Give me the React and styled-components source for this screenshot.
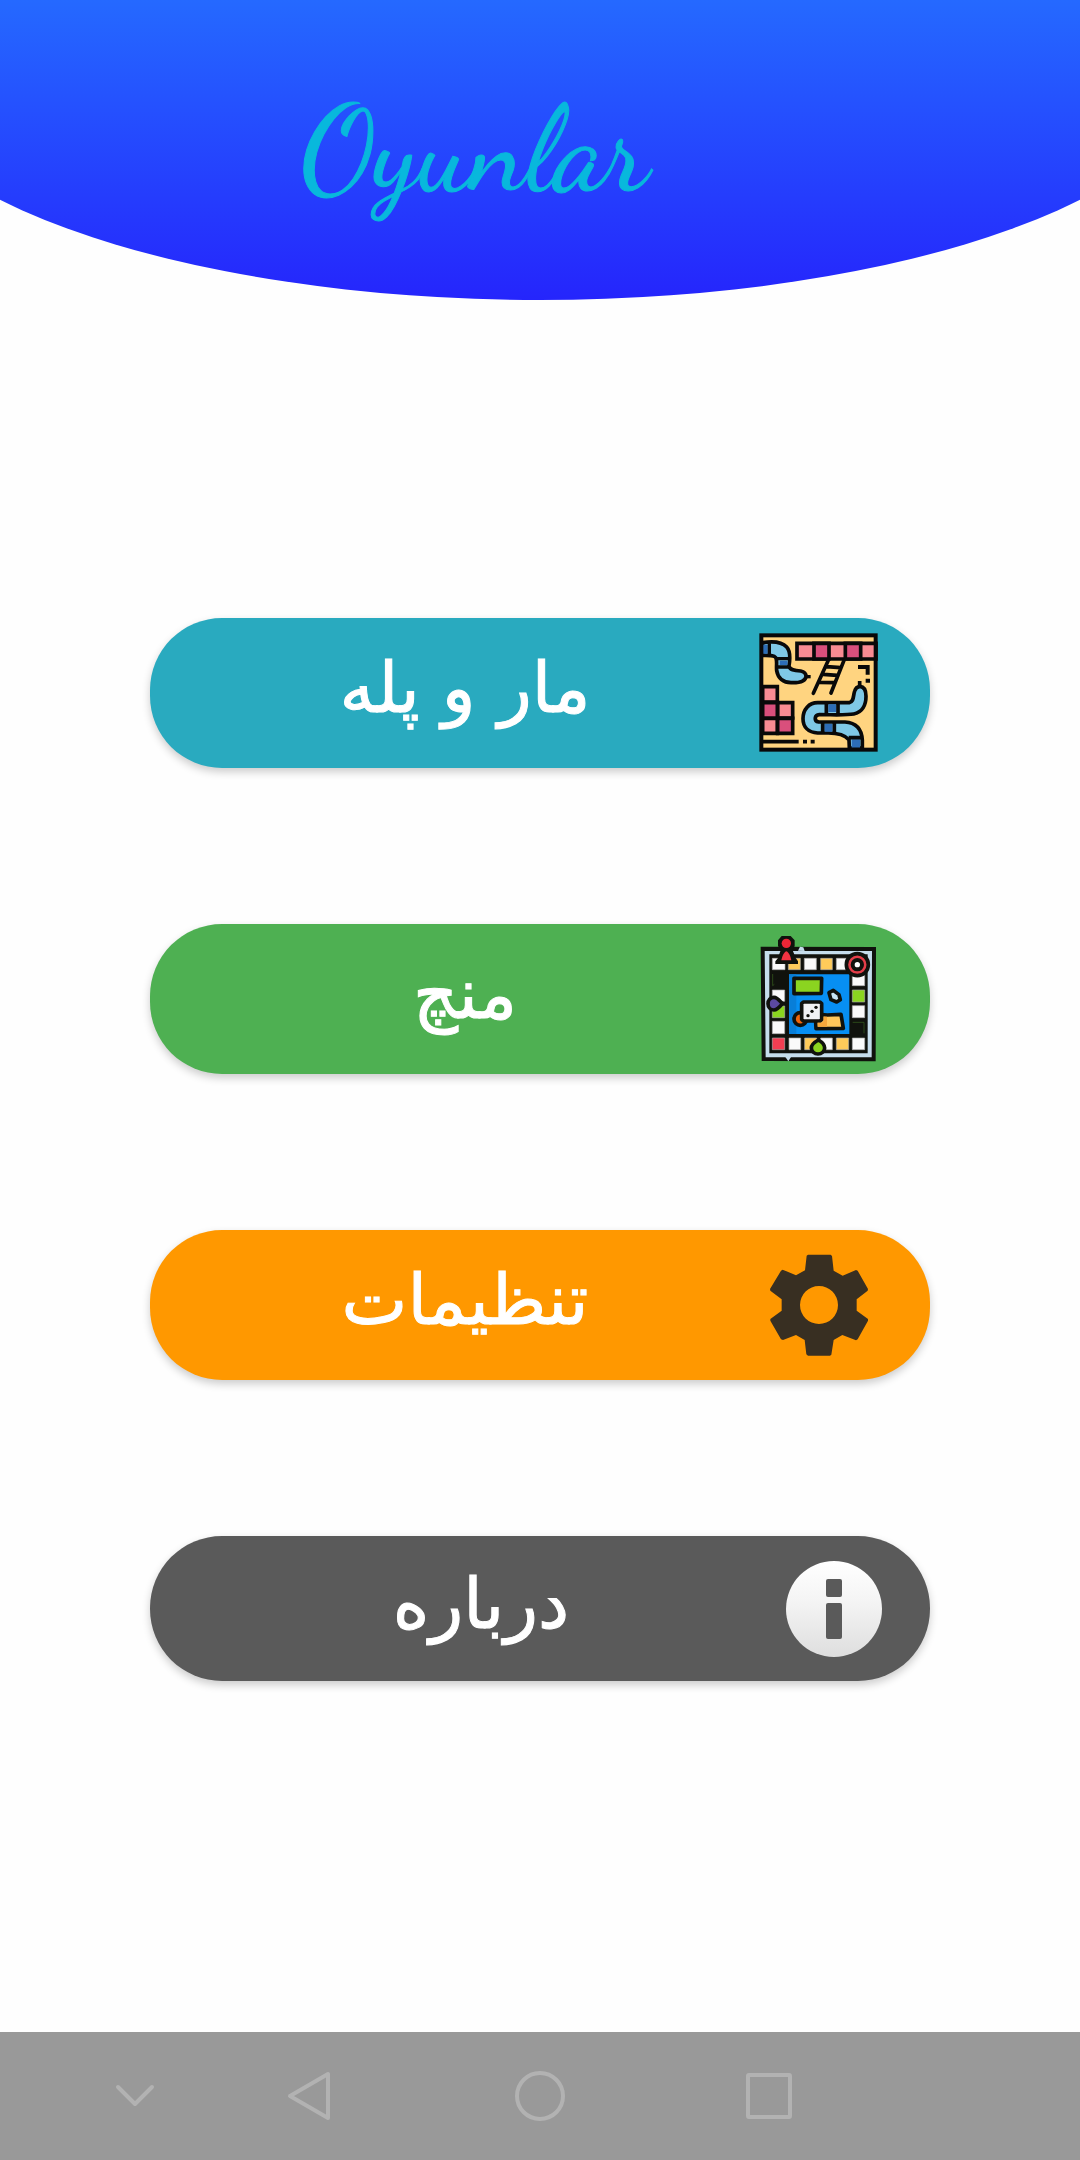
import React from 'react';
import styled, { createGlobalStyle } from 'styled-components';

const GlobalStyle = createGlobalStyle`
   body {
      margin: 0;
      background: #fefefe;
   }
   * {
      box-sizing: border-box;
   }
`;

const Page = styled.div`
   min-height: 100vh;
   display: flex;
   flex-direction: column;
   overflow-x: hidden;
`;

const Header = styled.header`
   height: 300px;
   padding: 86px 130px 0 0;
   text-align: center;
   background: linear-gradient(#2569ff, #2525fc);
   clip-path: ellipse(62% 245px at 50% 55px);
`;

const Title = styled.h1`
   margin: 0;
   color: #08b8dc;
   font: 400 119px/128px 'Dancing Script', cursive;
   -webkit-text-stroke: 1px #08b8dc;
`;

const Menu = styled.main`
   flex: 1;
   display: flex;
   flex-direction: column;
   gap: 156px;
   padding: 318px 150px 156px;
`;

const MenuButton = styled.button`
   display: flex;
   align-items: center;
   gap: 22px;
   height: ${({ $small }) => ($small ? 145 : 150)}px;
   padding: 0 48px;
   border: 0;
   border-radius: 72px;
   background: ${({ $color }) => $color};
   color: #fff;
   font: 400 70px/96px 'DejaVu Sans', sans-serif;
   box-shadow: 0 4px 8px rgba(0, 0, 0, 0.2);
   cursor: pointer;

   svg {
      flex: none;
   }
`;

const Label = styled.span`
   flex: 1;
   padding-bottom: 10px;
   text-align: center;
   -webkit-text-stroke: 1px #fff;
`;

const NavBar = styled.nav`
   display: grid;
   grid-template-columns: 124fr 229fr 228fr 229fr 124fr;
   height: 128px;
   padding: 0 73px;
   background: #999;
`;

const NavButton = styled.button`
   display: flex;
   align-items: center;
   justify-content: center;
   padding: 0;
   border: 0;
   background: none;
   color: #b2b2b2;
`;

const SnakesIcon = () => (
   <svg width="128" height="128" viewBox="42 45 384 384" aria-hidden="true">
      <rect x="63" y="64" width="345" height="344" fill="#ffd480" />
      <g stroke="#090909" strokeWidth="11">
         <path d="M69 383H176M189 383H201M212 383H224" fill="none" />
         <path d="M171 88H408V135H171Z" fill="#f88b93" />
         <path d="M222 88H267V135H222ZM316 88H362V135H316Z" fill="#d94f7c" />
         <path d="M68 218H112V264H68ZM113 266H158V312H113ZM68 313H112V358H68Z" fill="#f88b93" />
         <path d="M68 266H112V312H68ZM113 313H158V358H113Z" fill="#d94f7c" />
      </g>
      <path d="M354 159H383V182M377 200H390" fill="none" stroke="#090909" strokeWidth="12" />
      <g fill="none" stroke="#090909" strokeWidth="11" strokeLinecap="round">
         <path d="M265 139L220 238M312 139L273 237M260 158L302 161M250 181L292 184M239 205L281 206" />
      </g>
      {/* upper snake */}
      <path d="M68 86C98 81 125 83 140 99C152 112 150 138 147 156C149 168 162 170 182 171C192 173 198 179 198 187C197 200 184 207 153 206C130 206 114 193 110 170C108 152 114 132 103 127C94 123 80 124 68 124Z" fill="#7fc8e6" stroke="#090909" strokeWidth="11" />
      <path d="M196 188H212" stroke="#090909" strokeWidth="10" />
      <path d="M69 92H83V119H69ZM119 140H142V153H119Z" fill="#2d6db7" />
      <path d="M88 88V124M110 134H150M110 159H150" stroke="#090909" strokeWidth="10" />
      {/* lower snake */}
      <path d="M328 402L327 377C312 360 289 357 265 357H233C205 355 189 339 189 314C189 286 207 266 233 266H328C342 264 339 246 344 231C347 221 353 218 360 217C373 218 378 229 378 247C378 273 367 295 341 300C319 304 283 302 238 302C223 303 221 321 236 324H315C348 326 365 344 367 378V402Z" fill="#7fc8e6" stroke="#090909" strokeWidth="11" />
      <path d="M359 201V218" stroke="#090909" strokeWidth="11" />
      <path d="M265 271H288V294H265ZM253 330H277V353H253ZM335 376H360V401H335Z" fill="#2d6db7" />
      <path d="M259 266V300M294 266V300M248 325V358M283 325V358M326 371H368" stroke="#090909" strokeWidth="11" />
      <rect x="64" y="64" width="343" height="343" fill="none" stroke="#090909" strokeWidth="12" />
   </svg>
);

const LudoIcon = () => (
   <svg width="128" height="128" viewBox="42 45 384 384" aria-hidden="true">
      <path d="M68 86L402 87L401 418L71 417Z" fill="#c5ddec" stroke="#10120d" strokeWidth="12" />
      <path d="M88 103H383V400H88Z" fill="#10120d" />
      <g stroke="#aaa" strokeWidth="2">
         <path d="M97 115H135V149H97ZM193 115H229V149H193ZM289 115H325V149H289ZM337 162H374V197H337ZM337 257H374V293H337ZM97 210H134V244H97ZM97 304H134V341H97ZM147 354H182V389H147ZM242 354H277V389H242ZM337 354H374V389H337Z" fill="#fafafa" />
         <path d="M145 115H181V149H145ZM242 115H277V149H242ZM194 354H230V389H194ZM289 354H326V389H289Z" fill="#ffcb5a" />
         <path d="M337 210H374V246H337ZM97 258H134V293H97Z" fill="#8bd520" />
         <path d="M97 354H134V389H97Z" fill="#f33e52" />
      </g>
      <path d="M98 162V197L103 193M338 307H372V340" stroke="#38621f" strokeWidth="2" fill="none" />
      <path d="M147 163H328V342H147Z" fill="#078ff3" />
      <path d="M147 163H169V342H147Z" fill="#087ed8" />
      <g stroke="#10120d" strokeWidth="11" strokeLinejoin="round">
         <path d="M162 175H245L244 220L162 221Z" fill="#8bd420" />
         <path d="M280 211L297 224L301 239L290 246L273 239L267 218Z" fill="#c7e4f4" />
         <circle cx="181" cy="297" r="19" fill="#ef650c" />
         <path d="M226 282L262 285L303 283L310 325L228 326Z" fill="#ffc75b" />
         <path d="M190 246H240L245 251V299L240 303H190L185 298V251Z" fill="#f0f2f4" />
         <path d="M102 232C112 232 119 242 127 251C119 261 112 270 102 270C91 270 84 261 84 251C84 240 91 232 102 232Z" fill="#5b49a0" />
         <path d="M235 360C246 366 254 374 254 384C254 394 245 402 234 402C223 402 214 394 214 384C214 374 224 366 235 360Z" fill="#8bd420" />
      </g>
      <path d="M233 308H246L251 303V290H261V320H233Z" fill="#f5a83c" />
      <g fill="#10120d">
         <circle cx="228" cy="262" r="5" />
         <circle cx="216" cy="274" r="5" />
         <circle cx="204" cy="287" r="5" />
      </g>
      <circle cx="352" cy="134" r="33" fill="#e33e49" stroke="#10120d" strokeWidth="11" />
      <circle cx="352" cy="134" r="14" fill="#fff" stroke="#10120d" strokeWidth="12" />
      {/* red pawn */}
      <path d="M125 48H152L164 61V78L158 91L167 114L174 124V132H106V124L114 114L122 91L114 78V61Z" fill="#10120d" />
      <circle cx="139" cy="70" r="14" fill="#ed2636" />
      <path d="M139 94C148 98 151 109 154 121H124C127 109 130 98 139 94Z" fill="#f23342" />
      <path d="M174 92L180 80L190 82L194 93Z" fill="#c5ddec" />
      <path d="M136 411H153L145 424Z" fill="#c5ddec" />
   </svg>
);

const GearIcon = () => (
   <svg width="128" height="128" viewBox="42 33 384 384" aria-hidden="true">
      <path
         d="M204 74H272L276 78L281 122L308 137L348 120L353 122L384 177L383 182L350 208V242L384 267V272L353 328L348 331L307 315L281 330L274 374L270 377H204L199 373L194 330L168 315L129 330L123 328L91 272V267L125 242V208L91 182L90 177L123 122L128 119L168 136L195 121L200 77ZM237 168A57 57 0 1 0 237 282A57 57 0 1 0 237 168Z"
         fill="#382f22"
         fillRule="evenodd"
      />
   </svg>
);

const InfoIcon = () => (
   <svg width="96" height="96" viewBox="0 0 96 96" aria-hidden="true">
      <defs>
         <linearGradient id="info-fill" x1="0" y1="0" x2="0" y2="1">
            <stop offset="0" stopColor="#fff" />
            <stop offset="0.4" stopColor="#f5f5f5" />
            <stop offset="1" stopColor="#dedede" />
         </linearGradient>
      </defs>
      <circle cx="48" cy="48" r="48" fill="url(#info-fill)" />
      <rect x="40" y="18" width="16" height="18" rx="2" fill="#5a5a5a" />
      <rect x="40" y="42" width="16" height="36" rx="2" fill="#5a5a5a" />
   </svg>
);

const items = [
   { label: 'مار و پله', color: '#29aabf', Icon: SnakesIcon },
   { label: 'منچ', color: '#4eb052', Icon: LudoIcon },
   { label: 'تنظیمات', color: '#ff9800', Icon: GearIcon },
   { label: 'درباره', color: '#5a5a5a', Icon: InfoIcon, small: true },
];

const navItems = [
   { name: 'Hide', shape: <path d="M15 23L32 40L49 23" /> },
   { name: 'Back', shape: <path d="M48 10V54L10 32Z" /> },
   { name: 'Home', shape: <circle cx="32" cy="32" r="23" /> },
   { name: 'Recents', shape: <rect x="11" y="11" width="42" height="42" rx="1" /> },
];

const App = () => (
   <Page>
      <GlobalStyle />
      <Header>
         <Title>Oyunlar</Title>
      </Header>
      <Menu>
         {items.map(({ label, color, Icon, small }) => (
            <MenuButton key={label} type="button" $color={color} $small={small}>
               <Label lang="fa" dir="rtl">{label}</Label>
               <Icon />
            </MenuButton>
         ))}
      </Menu>
      <NavBar>
         {navItems.map(({ name, shape }) => (
            <NavButton key={name} type="button" aria-label={name}>
               <svg
                  width="64"
                  height="64"
                  viewBox="0 0 64 64"
                  fill="none"
                  stroke="currentColor"
                  strokeWidth="4"
                  strokeLinecap="round"
                  strokeLinejoin="round"
               >
                  {shape}
               </svg>
            </NavButton>
         ))}
      </NavBar>
   </Page>
);

export default App;
